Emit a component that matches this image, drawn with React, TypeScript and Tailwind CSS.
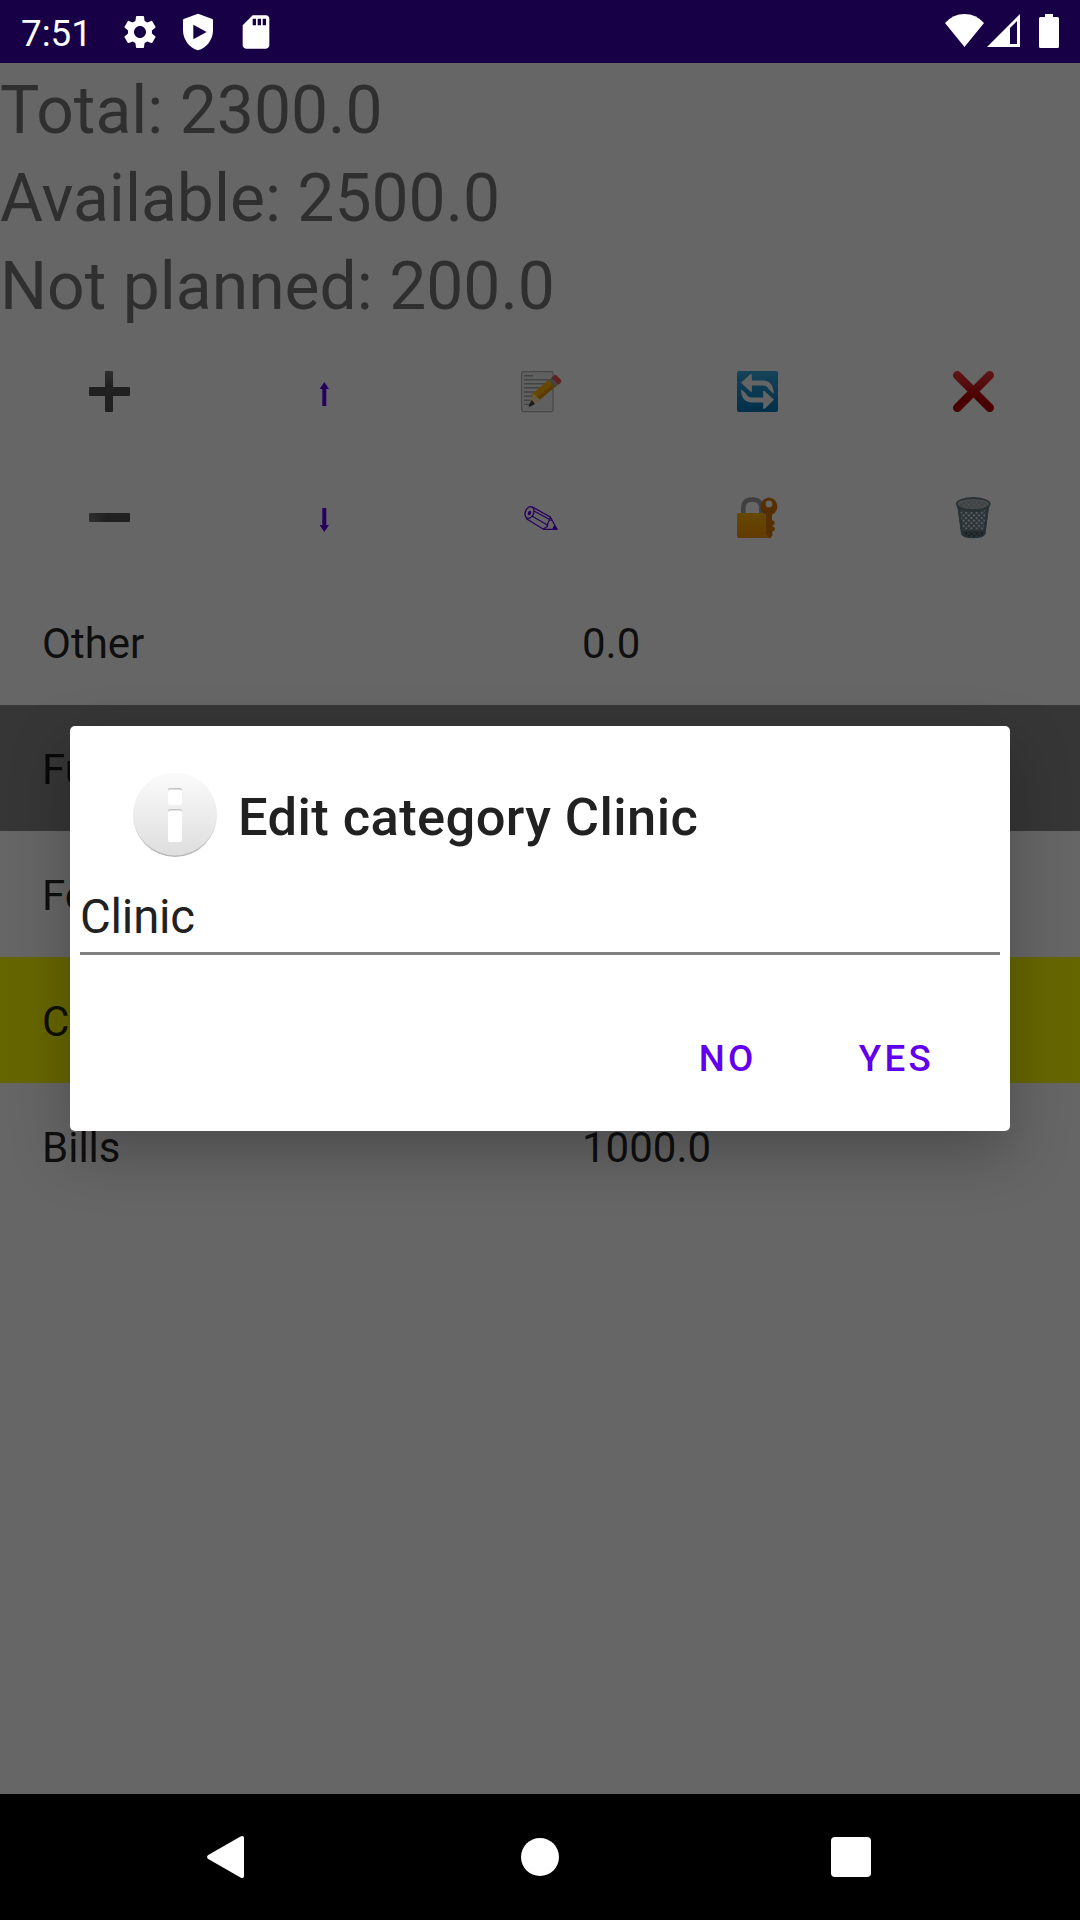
import React from 'react';

const Gear = () => (
  <svg className="size-10" viewBox="0 0 24 24" fill="#fff">
    <path d="M19.14 12.94c.04-.3.06-.61.06-.94 0-.32-.02-.64-.07-.94l2.03-1.58c.18-.14.23-.41.12-.61l-1.92-3.32c-.12-.22-.37-.29-.59-.22l-2.39.96c-.5-.38-1.03-.7-1.62-.94l-.36-2.54c-.04-.24-.24-.41-.48-.41h-3.84c-.24 0-.43.17-.47.41l-.36 2.54c-.59.24-1.13.57-1.62.94l-2.39-.96c-.22-.08-.47 0-.59.22L2.74 8.87c-.12.21-.08.47.12.61l2.03 1.58c-.05.3-.09.63-.09.94s.02.64.07.94l-2.03 1.58c-.18.14-.23.41-.12.61l1.92 3.32c.12.22.37.29.59.22l2.39-.96c.5.38 1.03.7 1.62.94l.36 2.54c.05.24.24.41.48.41h3.84c.24 0 .44-.17.47-.41l.36-2.54c.59-.24 1.13-.56 1.62-.94l2.39.96c.22.08.47 0 .59-.22l1.92-3.32c.12-.22.07-.47-.12-.61l-2.01-1.58zM12 15.6c-1.98 0-3.6-1.62-3.6-3.6s1.62-3.6 3.6-3.6 3.6 1.62 3.6 3.6-1.62 3.6-3.6 3.6z" />
  </svg>
);

const Shield = () => (
  <svg className="size-10" viewBox="0 0 24 24">
    <path fill="#fff" d="M12 1 3.4 4.2Q3 4.4 3 5v6c0 5.55 3.84 10.74 9 12 5.16-1.26 9-6.45 9-12V5q0-.6-.4-.8z" />
    <path fill="#180046" d="M9.2 7.7v8.6l8-4.3z" />
  </svg>
);

const SdCard = () => (
  <svg className="size-10" viewBox="0 0 24 24" fill="#fff">
    <path d="M18 2h-8L4.02 8 4 20c0 1.100.9 2 2 2h12c1.100 0 2-.9 2-2V4c0-1.100-.9-2-2-2zm-6 6h-2V4h2v4zm3 0h-2V4h2v4zm3 0h-2V4h2v4z" />
  </svg>
);

const StatusRight = () => (
  <svg className="h-[63px] w-[160px]" viewBox="920 0 160 63" fill="#fff">
    <path d="M945 23Q953 14 964.500 14T984 23L964.500 47Z" />
    <path fillRule="evenodd" d="M987 47 1020 14V47ZM1010 28V44H1017V21Z" />
    <path d="M1045 14h8v3h4.500q1.500 0 1.500 1.500v28q0 1.500-1.500 1.500h-17q-1.500 0-1.500-1.500v-28q0-1.500 1.500-1.500h4.500z" />
  </svg>
);

const Plus = () => (
  <svg className="size-12" viewBox="0 0 48 48">
    <defs>
      <linearGradient id="plus" x1="0" y1="0" x2="0" y2="1">
        <stop offset="0" stopColor="#757575" />
        <stop offset=".4" stopColor="#505050" />
      </linearGradient>
    </defs>
    <path fill="url(#plus)" d="M22 5h6q1 0 1 1v15h16q1 0 1 1v7q0 1-1 1H29v15q0 1-1 1h-6q-1 0-1-1V30H6q-1 0-1-1v-7q0-1 1-1h15V6q0-1 1-1z" />
  </svg>
);

const Minus = () => (
  <svg className="size-12" viewBox="0 0 48 48">
    <defs>
      <linearGradient id="minus">
        <stop offset="0" stopColor="#757575" />
        <stop offset=".45" stopColor="#505050" />
      </linearGradient>
    </defs>
    <rect x="5" y="21" width="41" height="9" rx="1" fill="url(#minus)" />
  </svg>
);

const ArrowUp = () => (
  <svg className="size-12" viewBox="0 0 48 48" fill="#6200ee">
    <path d="M24.300 16 29 23h-2.700v17h-4V23h-2.700z" />
  </svg>
);

const ArrowDown = () => (
  <svg className="size-12" viewBox="0 0 48 48" fill="#6200ee">
    <path d="M24.300 40 29 33h-2.700V16h-4v17h-2.700z" />
  </svg>
);

const Memo = () => (
  <svg className="size-12" viewBox="0 0 48 48">
    <rect x="5.600" y="5.600" width="31.500" height="40" rx="1.800" fill="#eceff1" fillOpacity=".85" stroke="#b0b0b0" strokeWidth="1.200" />
    <path stroke="#a4a8aa" strokeWidth="1.400" d="M8 9.700h9M8 13.700h25M8 17.700h24M8 21.800h20M8 26h16M8 30.200h12M8 34.300h10M8 38.400h8" />
    <path fill="#ffb300" d="m33.500 13 6.500 7-19 16-6.500-6.500z" />
    <path fill="#e69500" d="m37.500 17.500 2.500 2.500-19 16-2.500-2.500z" />
    <path fill="#ffe0a0" d="m17.500 27.500 7 6.500-9.500 5-2-2z" />
    <path fill="#424242" d="m15.800 34 3.200 4-5.200 2.700q-1.300.3-1.100-1.100z" />
    <path fill="#a5acb0" d="m35.500 11.500 7 7-3 2.500-7-7z" />
    <path fill="#ef5350" d="M37.500 9.800q1.800-1.500 3.600.1l3.600 3.600q1.400 1.700 0 3.300l-2.400 2-6.900-7z" />
  </svg>
);

const Pencil = () => (
  <svg className="size-12" viewBox="0 0 48 48" fill="none" stroke="#6200ee" strokeWidth="1.300" strokeLinejoin="round">
    <ellipse cx="13.500" cy="20.500" rx="4.200" ry="6" transform="rotate(22 13.500 20.500)" />
    <ellipse cx="13.500" cy="21" rx="1" ry="1.700" transform="rotate(22 13.500 21)" fill="#6200ee" />
    <path d="M16 14.700 34.300 25 41 37.300H27.500L10 26.500M18 19l17.500 9.500M16 24l16 9.500M34.300 25q-.2 3.200-2 5-1.200 3-1 4.500-2 1-3.800 2.800" />
    <path fill="#6200ee" d="m38 34.500 3 2.800h-4z" />
  </svg>
);

const Refresh = () => (
  <svg className="size-12" viewBox="0 0 48 48">
    <defs>
      <linearGradient id="refresh" x1="0" y1="0" x2="0" y2="1">
        <stop offset="0" stopColor="#35a8dc" />
        <stop offset="1" stopColor="#0277bd" />
      </linearGradient>
    </defs>
    <rect x="5" y="5" width="41" height="41" rx="2" fill="url(#refresh)" />
    <path fill="#fafafa" d="M9 16.800 18 8.400q1.800-1.200 1.800.8v5.400H31q10.500.2 10.700 13.200l-4.800-4.400q-1.700-3.800-6-4h-11V25q0 1.700-1.600.5z" />
    <path fill="#fafafa" d="M42 33.800 33 42.600q-1.800 1.200-1.800-.8v-5.300H20q-10.800-.2-11-13.200l5 4.200q1.500 3.800 6 4h11.200v-5.800q0-1.700 1.600-.5z" />
  </svg>
);

const LockKey = () => (
  <svg className="size-12" viewBox="0 0 48 48">
    <defs>
      <linearGradient id="lock" x1="0" y1="0" x2="0" y2="1">
        <stop offset="0" stopColor="#ffb300" />
        <stop offset="1" stopColor="#f59300" />
      </linearGradient>
    </defs>
    <path fill="none" stroke="#a0a0a0" strokeWidth="4.500" d="M11.300 22v-6q0-8.500 9-8.500t9 8.500v6" />
    <rect x="5" y="21" width="34" height="25" rx="2" fill="url(#lock)" />
    <path fill="#d57600" fillRule="evenodd" d="M37 5.500a9 9 0 0 0-3 17.200V42l4 4.500 2.600-3.500-.5-3 2.800-2-.3-2.500-2.500-1.500 2.500-2-.2-2.500-2.400-1.500v-5.300A9 9 0 0 0 37 5.500zm0 3.100a3.400 3.400 0 1 1 0 6.800 3.400 3.400 0 0 1 0-6.800z" />
  </svg>
);

const Cross = () => (
  <svg className="size-12" viewBox="0 0 48 48">
    <defs>
      <linearGradient id="cross" x1="0" y1="0" x2="0" y2="48" gradientUnits="userSpaceOnUse">
        <stop offset=".1" stopColor="#ea3a3a" />
        <stop offset=".7" stopColor="#b70000" />
      </linearGradient>
    </defs>
    <path stroke="url(#cross)" strokeWidth="8.600" strokeLinecap="round" d="m9.300 9.300 32.400 32.400M41.700 9.300 9.300 41.700" />
  </svg>
);

const Trash = () => (
  <svg className="size-12" viewBox="0 0 48 48">
    <defs>
      <pattern id="mesh" width="5.200" height="5.200" patternUnits="userSpaceOnUse">
        <path d="m0 0 5.200 5.200M5.200 0 0 5.200" stroke="#657c88" strokeWidth="1.500" />
      </pattern>
      <linearGradient id="bin" x1="0" y1="0" x2="0" y2="1">
        <stop offset=".72" stopColor="#e8e8e8" />
        <stop offset=".82" stopColor="#303b41" />
      </linearGradient>
    </defs>
    <path fill="url(#bin)" stroke="#657c88" strokeWidth="1.500" d="m10.500 15 3.500 27q1 3.500 11.200 3.500T36.500 42L40 15z" />
    <path fill="url(#mesh)" d="m10.500 15 3.500 27q1 3.500 11.200 3.500T36.500 42L40 15z" />
    <path fill="none" stroke="#657c88" strokeWidth="2.400" d="m10.800 16 3.500 26M39.700 16l-3.500 26" />
    <ellipse cx="25.200" cy="12" rx="16.500" ry="6" fill="#bcc0c2" stroke="#657c88" strokeWidth="1.800" />
    <ellipse cx="25.200" cy="12.300" rx="14" ry="4" fill="url(#mesh)" opacity=".35" />
    <path fill="none" stroke="#657c88" strokeWidth="2" d="M9.500 14.500q4 4.500 15.700 4.500t15.700-4.500" />
  </svg>
);

const InfoIcon = () => (
  <svg className="size-[84px]" viewBox="0 0 84 84">
    <defs>
      <linearGradient id="info" x1="0" y1="0" x2="0" y2="1">
        <stop offset="0" stopColor="#fbfbfb" />
        <stop offset="1" stopColor="#dedede" />
      </linearGradient>
      <linearGradient id="rim" x1="0" y1="0" x2="0" y2="1">
        <stop offset=".5" stopColor="#ececec" />
        <stop offset="1" stopColor="#b5b5b5" />
      </linearGradient>
    </defs>
    <circle cx="42" cy="42" r="42" fill="url(#rim)" />
    <circle cx="42" cy="41" r="41.500" fill="url(#info)" />
    <rect x="35" y="15" width="14" height="16" rx="2" fill="#c4c4c4" />
    <rect x="35" y="16.500" width="14" height="15.500" rx="2" fill="#fff" />
    <rect x="35" y="36" width="14" height="32" rx="2" fill="#c4c4c4" />
    <rect x="35" y="37.500" width="14" height="31.500" rx="2" fill="#fff" />
  </svg>
);

const actions = [Plus, ArrowUp, Memo, Refresh, Cross, Minus, ArrowDown, Pencil, LockKey, Trash];

const rows = [
  { name: 'Other', value: '0.0', tone: 'bg-white' },
  { name: 'Fun', value: '', tone: 'bg-[#888888]' },
  { name: 'Food', value: '', tone: 'bg-white' },
  { name: 'Clinic', value: '', tone: 'bg-[#ffff00]' },
  { name: 'Bills', value: '1000.0', tone: 'bg-white' },
];

export default function App() {
  return (
    <div className="relative flex h-[1920px] w-[1080px] flex-col overflow-hidden bg-white font-[Roboto,sans-serif]">
      <header className="z-10 flex h-[63px] shrink-0 items-center bg-[#180046]">
        <div className="w-[120px] pl-[21px] pt-[4px] text-[36.75px] leading-[60px] text-white">7:51</div>
        <div className="flex flex-1 gap-[18px]">
          <Gear />
          <Shield />
          <SdCard />
        </div>
        <StatusRight />
      </header>

      <main className="flex flex-1 flex-col">
        <section className="h-[264px] text-[66px] leading-[88px] text-black/54">
          <p className="h-[88px] pt-[4px]">Total: 2300.0</p>
          <p className="h-[88px] pt-[4px]">Available: 2500.0</p>
          <p className="h-[88px] pt-[4px]">Not planned: 200.0</p>
        </section>
        <section className="grid grid-cols-5">
          {actions.map((Icon, i) => (
            <button key={i} className="flex h-[126px] items-center justify-center">
              <Icon />
            </button>
          ))}
        </section>
        <section>
          {rows.map((r) => (
            <div key={r.name} className={`grid h-[126px] grid-cols-2 pt-[3px] text-[42px] leading-[124px] text-black/87 ${r.tone}`}>
              <span className="h-[123px] pl-[42px]">{r.name}</span>
              <span className="h-[123px] pl-[42px]">{r.value}</span>
            </div>
          ))}
        </section>
      </main>

      <div className="absolute inset-x-0 top-[63px] bottom-[126px] bg-black/60">
        <div className="mx-[70px] mt-[663px] flex h-[405px] flex-col rounded-[5px] bg-white text-[#212121] shadow-[0_22px_60px_rgba(0,0,0,0.26)]">
          <div className="flex h-[153px] items-start pl-[63px] pt-[47px]">
            <InfoIcon />
            <h1 className="pl-[21px] pt-[2px] text-[52.5px] font-medium leading-[84px] tracking-[0.0075em]">Edit category Clinic</h1>
          </div>
          <div className="mx-[10px] h-[76px] border-b-3 border-[#808080] pt-[10px] text-[47.25px] leading-[56px] tracking-[-0.2px]">Clinic</div>
          <div className="flex flex-1 justify-end pr-[76px] pt-[74px] text-[36.75px] font-medium leading-[60px] tracking-[0.0892em] text-[#6200ee]">
            <button className="h-[60px]">NO</button>
            <button className="ml-[102px] h-[60px]">YES</button>
          </div>
        </div>
      </div>

      <footer className="z-10 flex h-[126px] shrink-0 items-center bg-black pl-[205px]">
        <svg className="size-[44px]" viewBox="0 0 44 44" fill="#fff">
          <path d="M2.800 20.200 35.500 1.500Q39 0 39 3V41Q39 44 35.500 42.500L2.800 23.800Q1 22 2.800 20.200Z" />
        </svg>
        <div className="ml-[272px] size-[38px] rounded-full bg-white" />
        <div className="ml-[272px] size-[40px] rounded-[4px] bg-white" />
      </footer>
    </div>
  );
}
